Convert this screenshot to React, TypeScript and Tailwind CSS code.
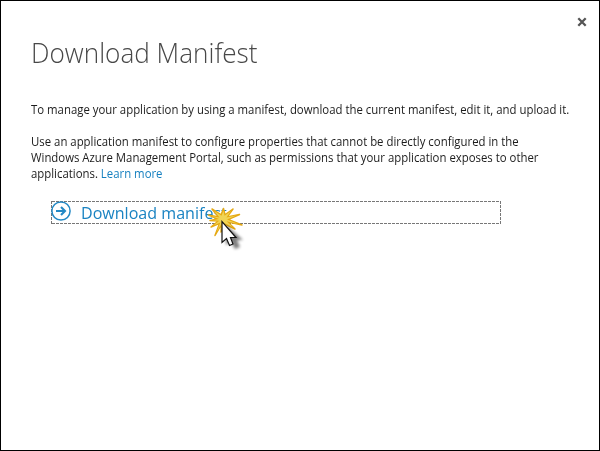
import React from "react";

function CloseIcon() {
  return (
    <svg width="10" height="10" viewBox="0 0 10 10" fill="none" stroke="#555" strokeWidth="2.3">
      <path d="M1.3 1.3 8.7 8.7M8.7 1.3 1.3 8.7" />
    </svg>
  );
}

function ArrowCircle() {
  return (
    <svg width="20" height="20" viewBox="0 0 20 20" fill="none" stroke="#2489c5" className="-ml-px -mt-px shrink-0">
      <circle cx="10" cy="10" r="9.1" strokeWidth="1.5" />
      <path d="M5 10H14" strokeWidth="2" />
      <path d="M10 6 14 10 10 14" strokeWidth="2.1" />
    </svg>
  );
}

const center = [223, 219.5];
const tips = [
  [223.5, 208.5], [233, 209], [239.5, 214.5], [242, 225], [235, 229],
  [221, 232], [215, 235.5], [211, 227], [210, 220.5], [208.5, 215], [212, 209],
];

function burst(reach: number, inner: number) {
  const angles = tips.map(([x, y]) => Math.atan2(y - center[1], x - center[0]));
  return tips
    .map(([x, y], i) => {
      const next = angles[(i + 1) % tips.length];
      const gap = (next - angles[i] + Math.PI * 4) % (Math.PI * 2);
      const mid = angles[i] + gap / 2;
      const tx = center[0] + (x - center[0]) * reach;
      const ty = center[1] + (y - center[1]) * reach;
      return `${tx},${ty} ${center[0] + Math.cos(mid) * inner},${center[1] + Math.sin(mid) * inner}`;
    })
    .join(" ");
}

function ClickCursor() {
  return (
    <svg width="56" height="60" viewBox="200 196 56 60" className="absolute left-[149px] top-[-5px]">
      <defs>
        <filter id="soft" x="-40%" y="-40%" width="180%" height="180%">
          <feGaussianBlur stdDeviation="1.7" />
        </filter>
      </defs>
      <polygon points={burst(1, 5)} fill="#e9b01c" stroke="#e5a914" strokeWidth="1.5" strokeLinejoin="round" />
      <polygon points={burst(0.8, 4)} fill="#f0d455" />
      <path d="M226 225 226 245 231 242 235 249 240 247 237 240 243 240Z" fill="#000" opacity=".5" filter="url(#soft)" />
      <path
        d="M222 221.500V242.500L226.500 238.500 229.500 245.500 233 244 230.500 237.500H236Z"
        fill="#fff"
        stroke="#111"
        strokeWidth="1.2"
      />
    </svg>
  );
}

const line = "h-4 whitespace-nowrap";
const bodyText = "inline-block origin-left scale-x-[0.948]";
const dashX = "h-px bg-[repeating-linear-gradient(90deg,#777_0_3px,transparent_3px_4px)]";
const dashY = "w-px bg-[repeating-linear-gradient(180deg,#777_0_3px,transparent_3px_4px)]";

export default function App() {
  return (
    <main className="h-[451px] w-[600px] border border-black bg-white px-[30px] font-['Open_Sans','Noto_Sans',sans-serif] text-[#1c1c1c]">
      <div className="-mr-[18px] flex h-[33px] justify-end pt-4">
        <button aria-label="Close" className="h-[10px] w-[10px]"><CloseIcon /></button>
      </div>
      <h1 className="h-[36px] whitespace-nowrap text-[28px] font-light leading-[36px] text-[#484848]">
        <span className="inline-block origin-left scale-x-[0.934]">Download Manifest</span>
      </h1>
      <div className="pt-8 text-[12px] leading-4">
        <p className={line}><span className={bodyText}>To manage your application by using a manifest, download the current manifest, edit it, and upload it.</span></p>
        <div className="pt-4">
          <p className={line}><span className={bodyText}>Use an application manifest to configure properties that cannot be directly configured in the</span></p>
          <p className={line}><span className={bodyText}>Windows Azure Management Portal, such as permissions that your application exposes to other</span></p>
          <p className={line}>
            <span className={bodyText}>applications. <a className="text-[#147fbf]">Learn more</a></span>
          </p>
        </div>
      </div>
      <a className="relative ml-5 mt-[19px] flex h-[23px] w-[450px]">
        <span className={dashY} />
        <span className="flex w-[448px] flex-col">
          <span className={dashX} />
          <span className="flex h-[21px]">
            <ArrowCircle />
            <span className="ml-[10px] origin-left scale-x-[0.945] whitespace-nowrap text-[17px] leading-[22px] text-[#1a83c2]">Download manifest</span>
          </span>
          <span className={dashX} />
        </span>
        <span className={dashY} />
        <ClickCursor />
      </a>
    </main>
  );
}
